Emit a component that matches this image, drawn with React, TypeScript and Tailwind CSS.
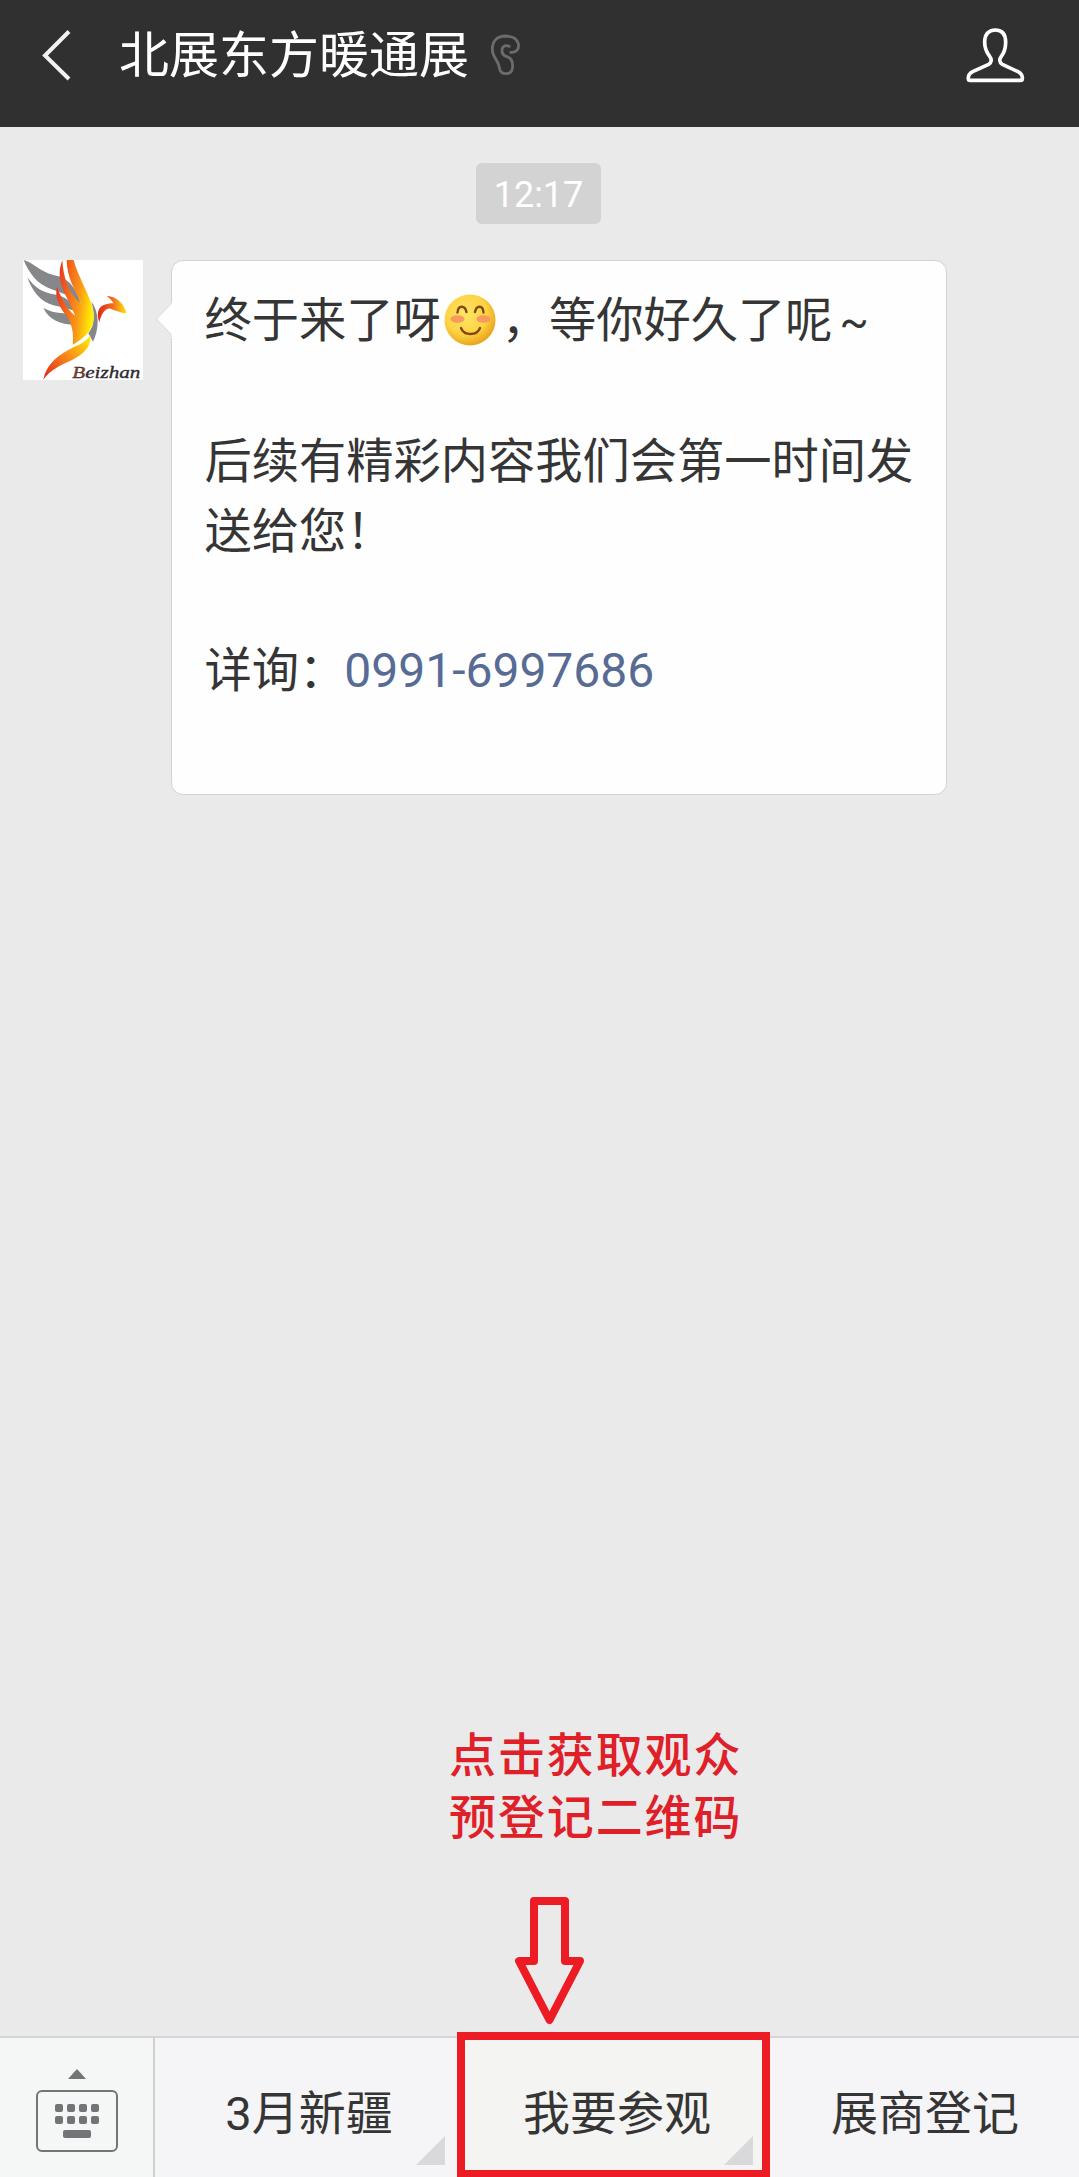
import type { ReactNode } from "react";
import clsx from "clsx";

const menu = [
  { label: "3月新疆", hasSub: true },
  { label: "我要参观", hasSub: true, highlighted: true },
  { label: "展商登记", hasSub: false },
];

export default function App() {
  return (
    <div className="relative flex h-[2177px] w-[1079px] flex-col overflow-hidden bg-[#ebeaeb] font-[Roboto,'Noto_Sans_CJK_SC',sans-serif] text-[#353535]">
      <Header />
      <main className="flex flex-1 flex-col items-center pt-9">
        <time className="mr-[2px] flex h-[61px] w-[125px] items-center justify-center rounded-md bg-[#d3d3d3] pt-[3px] text-[36px] text-white">
          12:17
        </time>
        <div className="mt-9 flex w-full items-start pl-[22.5px]">
          <Avatar />
          <Bubble>
            <p className="flex items-center">
              终于来了呀
              <SmileEmoji />
              ，等你好久了呢
              <span className="ml-[7px] text-[43px]">~</span>
            </p>
            <p className="mt-[71px]">
              后续有精彩内容我们会第一时间发
              <br />
              送给您！
            </p>
            <p className="mt-[69px]">
              详询：<a className="-ml-[2px] text-[48px] text-[#576b95]">0991-6997686</a>
            </p>
          </Bubble>
        </div>
      </main>
      <Callout />
      <BottomBar />
    </div>
  );
}

function Header() {
  return (
    <header className="flex h-[127px] shrink-0 items-start bg-[#303030]">
      <svg className="mt-[25px] ml-[38px] h-[60px] w-[36px]" viewBox="0 0 36 60" fill="none" stroke="#f2f2f2" strokeWidth="4">
        <path d="M31 6.5 7 30.5 31 54" />
      </svg>
      <h1 className="ml-[45px] text-[50px] leading-[112px] text-white">北展东方暖通展</h1>
      <svg className="mt-[25px] ml-[11px] h-[60px] w-[50px]" viewBox="0 0 150 180" fill="none" stroke="#6c6c6c" strokeWidth="8.5" strokeLinecap="round">
        <path d="M92 82C110 84 118 71 115 56C110 40 95 33 75 33C50 34 36 50 37 75C38 100 56 105 58 128C59 140 68 147 80 146C95 145 98 135 98 122C98 105 92 98 80 95C68 90 64 80 67 70C70 62 78 60 88 64" />
      </svg>
      <svg className="mt-[25px] mr-[54px] ml-auto h-[60px] w-[60px]" viewBox="0 0 180 180" fill="none" stroke="#fff" strokeWidth="11" strokeLinejoin="round">
        <path d="M91 15C70 15 59 29 59 52C59 72 66 84 74 94C81 103 80 113 71 118L23 140C12 146 9 152 10 161Q10 166 16 166H166Q172 166 172 161C173 152 170 146 159 140L112 118C103 113 102 103 109 94C117 84 122 72 122 52C122 29 112 15 91 15Z" />
      </svg>
    </header>
  );
}

function Bubble({ children }: { children: ReactNode }) {
  return (
    <div className="relative ml-7 h-[535px] w-[776px] rounded-xl border-[1.5px] border-[#d3d2d3] bg-[#fefefe] pt-[25px] pl-[33px] text-[47.25px] leading-[70px] whitespace-nowrap">
      <svg className="absolute top-[41px] -left-[17px] h-[36px] w-[19px]" viewBox="0 0 19 36">
        <path d="M19 0H17L1.5 17 16 32V36H19Z" fill="#fefefe" />
        <path d="M16.5 0Q16.5 2 14 4L1.5 17 14 30Q16.5 32 16.5 35" fill="none" stroke="#dcdbdc" />
      </svg>
      {children}
    </div>
  );
}

function SmileEmoji() {
  return (
    <svg className="mr-[6px] mb-[2px] ml-[3px] size-[52px]" viewBox="0 0 52 52" fill="none" strokeLinecap="round">
      <defs>
        <radialGradient id="face" cx="0.42" cy="0.38" r="0.62">
          <stop offset="0" stopColor="#ffe566" />
          <stop offset="0.65" stopColor="#fdd444" />
          <stop offset="1" stopColor="#eca51c" />
        </radialGradient>
      </defs>
      <circle cx="26" cy="26" r="25.5" fill="url(#face)" />
      <ellipse cx="13.5" cy="25" rx="7" ry="3.8" fill="#f79a60" />
      <ellipse cx="39.5" cy="25" rx="7" ry="3.8" fill="#f79a60" />
      <path d="M13.5 18.5C14 11 21 11 22.5 18M31 18C32.5 11 39 11 39.5 18.5M17 34C20 42 33 42 36 34" stroke="#824a0d" strokeWidth="2.4" />
    </svg>
  );
}

function Avatar() {
  return (
    <svg className="size-[120px] shrink-0 overflow-visible bg-white" viewBox="69 60 360 360">
      <defs>
        <linearGradient id="wing" x1="0" x2="1" y1="0.2" y2="0.45">
          <stop offset="0" stopColor="#e8301c" />
          <stop offset="0.35" stopColor="#f4691b" />
          <stop offset="0.65" stopColor="#fa9a17" />
          <stop offset="1" stopColor="#fff000" />
        </linearGradient>
        <linearGradient id="head" x1="0" x2="1">
          <stop offset="0" stopColor="#e0261c" />
          <stop offset="0.5" stopColor="#f26a1b" />
          <stop offset="1" stopColor="#fde80c" />
        </linearGradient>
        <linearGradient id="tail" x1="0" x2="1" y1="1" y2="0">
          <stop offset="0" stopColor="#dd1f1c" />
          <stop offset="0.5" stopColor="#f7861a" />
          <stop offset="1" stopColor="#fff200" />
        </linearGradient>
      </defs>
      <g fill="#85878a">
        <path d="M71 60C100 68 120 95 160 105C205 112 225 140 243 192C215 170 190 160 155 148C110 133 85 95 71 60Z" />
        <path d="M82 112C105 145 130 157 160 163C195 168 215 185 228 214C200 205 185 202 160 196C120 186 95 150 82 112Z" />
        <path d="M130 204C150 215 170 219 190 220C205 222 218 228 222 240L226 254C180 254 148 240 130 204Z" />
        <path d="M274 184C300 220 297 270 279 305L265 280C285 255 285 225 274 184Z" />
      </g>
      <path fill="url(#wing)" d="M200 60H221C235 112 266 160 277 200C288 248 278 280 218 314C222 278 216 245 192 218C174 192 164 166 171 140C184 174 198 204 226 228C206 180 176 135 179 95C180 80 184 70 187 60C190 112 205 162 243 190C225 150 200 110 200 60Z" />
      <path fill="url(#head)" d="M298 247C285 208 302 190 341 190C335 180 328 174 320 167C352 170 372 192 380 220C362 218 346 212 332 206C315 204 304 222 298 247Z" />
      <path fill="url(#tail)" d="M130 419C140 370 175 345 220 322C245 312 262 300 271 286C275 320 250 345 212 362C180 376 150 390 130 419Z" />
      <text x="217" y="414" textLength="204" lengthAdjust="spacingAndGlyphs" fill="#2c2a30" stroke="#2c2a30" className="font-['Liberation_Serif',serif] text-[52px] italic">
        <tspan fill="#8e3a2c">B</tspan>eizhan
      </text>
    </svg>
  );
}

/* Hand-made annotation pointing at the highlighted menu entry */
function Callout() {
  return (
    <div className="absolute top-[1725px] left-[449px] text-[47px] leading-[62px] font-medium tracking-[1.9px] text-[#df2029]">
      <p>点击获取观众</p>
      <p>预登记二维码</p>
      <svg className="mt-[47px] ml-[65px] h-[130px] w-[72px]" viewBox="514 1896 72 130" fill="none" stroke="#ed1c24" strokeWidth="8" strokeLinejoin="round">
        <path d="M534 1901H565V1961H580L549.5 2020 519 1961H534Z" />
      </svg>
    </div>
  );
}

function BottomBar() {
  return (
    <footer className="flex h-[141px] shrink-0 border-t-2 border-[#d6d5d6] bg-[#f5f4f6]">
      <div className="w-[155px] shrink-0 border-r-2 border-[#d2d1d2] bg-[#f5f6f6]">
        <svg className="mt-[30px] ml-[35px] h-[86px] w-[84px]" viewBox="35 2068 84 86" fill="#727577">
          <path d="M77 2069 86 2079H68Z" />
          <rect x="37" y="2091" width="80" height="60" rx="5" fill="none" stroke="#727577" strokeWidth="2" />
          {[2104, 2116].map((y) =>
            [55, 67, 79, 91].map((x) => <rect key={`${x}-${y}`} x={x} y={y} width="8" height="8" rx="2" />)
          )}
          <rect x="63" y="2130" width="28" height="8" rx="2" />
        </svg>
      </div>
      {menu.map((m) => (
        <div
          key={m.label}
          className={clsx(
            "relative flex w-[308px] shrink-0 items-center justify-center pt-[12px] text-[47px] leading-none",
            m.highlighted && "bg-[#f4f4f2]"
          )}
        >
          {m.label}
          {m.hasSub && (
            <svg className="absolute right-[18px] bottom-3 size-[29px]" viewBox="0 0 29 29">
              <path d="M29 0V29H0Z" fill="#d9d8da" />
            </svg>
          )}
          {m.highlighted && <div className="absolute -top-[6px] right-[1px] bottom-0 -left-[6px] border-8 border-b-[7px] border-[#ed1c24]" />}
        </div>
      ))}
      <div className="w-0.5 bg-[#dddcde]" />
    </footer>
  );
}
